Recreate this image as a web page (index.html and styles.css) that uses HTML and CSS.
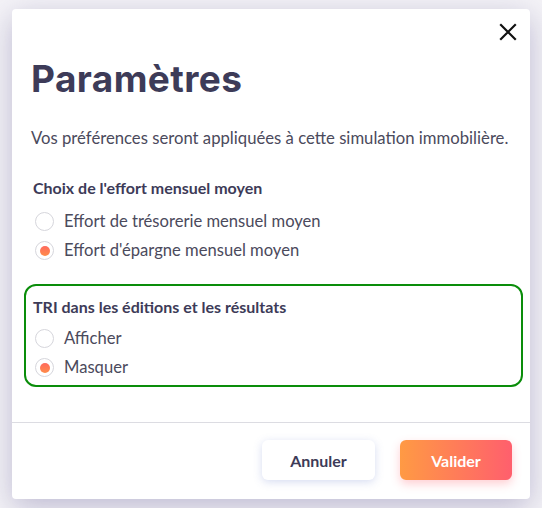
FILE: index.html
```html
<!DOCTYPE html>
<html lang="fr">
<head>
<meta charset="utf-8">
<link rel="stylesheet" href="styles.css">
</head>
<body>
<div class="modal">
  <div class="modal-body">
    <button class="close" aria-label="Fermer">
      <svg width="18" height="18" viewBox="0 0 18 18"><path d="M2 2 L16 16 M16 2 L2 16" stroke="#111" stroke-width="2.2" stroke-linecap="square"/></svg>
    </button>
    <h1 class="title">Paramètres</h1>
    <p class="desc">Vos préférences seront appliquées à cette simulation immobilière.</p>
    <div class="group">
      <div class="group-label">Choix de l'effort mensuel moyen</div>
      <label class="radio"><span class="dot"></span>Effort de trésorerie mensuel moyen</label>
      <label class="radio"><span class="dot checked"></span>Effort d'épargne mensuel moyen</label>
    </div>
    <div class="group boxed">
      <div class="group-label">TRI dans les éditions et les résultats</div>
      <label class="radio"><span class="dot"></span>Afficher</label>
      <label class="radio"><span class="dot checked"></span>Masquer</label>
    </div>
  </div>
  <div class="modal-footer">
    <button class="btn btn-light">Annuler</button>
    <button class="btn btn-primary">Valider</button>
  </div>
</div>
</body>
</html>
```
FILE: styles.css
```css
html, body {
  margin: 0;
  padding: 0;
}
body {
  background: #f4f3f7;
  width: 542px;
  height: 508px;
  overflow: hidden;
  font-family: "Lato", "Liberation Sans", sans-serif;
}
.modal {
  margin: 9px 0 0 12px;
  width: 518px;
  height: 490px;
  background: #fff;
  border-radius: 4px;
  box-shadow: 0 8px 30px rgba(90, 80, 140, 0.35);
  display: flex;
  flex-direction: column;
}
.modal-body {
  position: relative;
  flex: 1;
  padding: 0 19px;
  border-bottom: 1px solid #dcdce2;
}
.close {
  position: absolute;
  right: 13px;
  top: 14px;
  border: 0;
  background: none;
  padding: 0;
  width: 18px;
  height: 18px;
  cursor: pointer;
}
.title {
  margin: 0;
  padding-top: 46px;
  font-family: "Inter", sans-serif;
  font-weight: 700;
  font-size: 37px;
  line-height: 48px;
  color: #3d3b58;
  letter-spacing: 0.4px;
}
.desc {
  margin: 23px 0 0;
  font-size: 16.7px;
  line-height: 24px;
  color: #4b4a5c;
}
.group {
  margin-top: 28px;
}
.group-label {
  font-weight: 700;
  font-size: 16px;
  line-height: 20px;
  color: #3d3b58;
  margin-bottom: 9px;
  padding-left: 2px;
}
.radio {
  display: flex;
  align-items: center;
  gap: 10px;
  font-size: 16.6px;
  line-height: 29px;
  color: #4b4a5c;
}
.dot {
  width: 19px;
  height: 19px;
  margin-left: 4px;
  border-radius: 50%;
  border: 1px solid #d6d6dc;
  box-sizing: border-box;
  display: flex;
  align-items: center;
  justify-content: center;
}
.dot.checked::after {
  content: "";
  width: 10px;
  height: 10px;
  border-radius: 50%;
  background: linear-gradient(180deg, #ff6a5e, #ff8c4a);
}
.boxed {
  margin: 19px -12px 0 -7px;
  padding: 11px 8px 3px 5px;
  border: 2px solid #0a8d0a;
  border-radius: 12px;
}
.boxed .group-label {
  margin-bottom: 7px;
}
.modal-footer {
  height: 76px;
  display: flex;
  justify-content: flex-end;
  align-items: flex-start;
  gap: 25px;
  padding: 17px 18px 0;
  box-sizing: border-box;
}
.btn {
  height: 40px;
  border: 0;
  border-radius: 6px;
  font-family: "Lato", sans-serif;
  font-weight: 700;
  font-size: 16px;
  cursor: pointer;
}
.btn-light {
  width: 113px;
  background: #fff;
  color: #3d3b58;
  box-shadow: 0 2px 8px rgba(120, 140, 210, 0.3);
}
.btn-primary {
  width: 112px;
  color: #fff;
  background: linear-gradient(90deg, #ff9a44, #ff5f6d);
  box-shadow: 0 4px 10px rgba(255, 95, 109, 0.3);
}
```
